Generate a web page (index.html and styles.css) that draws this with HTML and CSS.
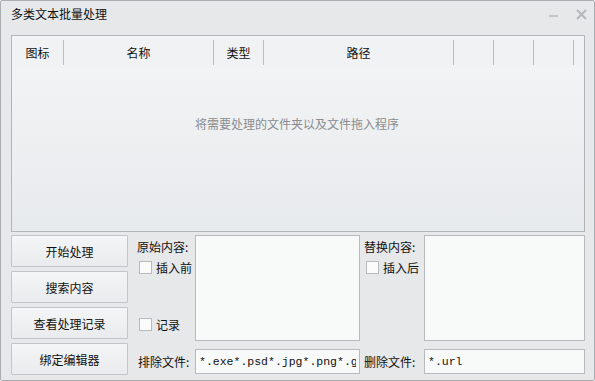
FILE: index.html
```html
<!DOCTYPE html>
<html>
<head>
    <title>多类文本批量处理</title>
    <link rel="stylesheet" href="styles.css">
</head>
<body>
    <div class="window">
        <div class="titlebar">
            <span class="title">多类文本批量处理</span>
            <div class="controls">
                <span class="btn-min"></span>
                <svg class="btn-close" width="11" height="11" viewBox="0 0 11 11">
                    <path d="M1 1 L10 10 M10 1 L1 10" stroke="#b4b8bb" stroke-width="2" fill="none"/>
                </svg>
            </div>
        </div>

        <div class="list">
            <div class="list-head">
                <div class="col c1">图标</div>
                <div class="col c2">名称</div>
                <div class="col c3">类型</div>
                <div class="col c4">路径</div>
                <div class="col c5"></div>
                <div class="col c6"></div>
                <div class="col c7"></div>
            </div>
            <div class="list-body">
                <span class="hint">将需要处理的文件夹以及文件拖入程序</span>
            </div>
        </div>

        <div class="bottom">
            <div class="buttons">
                <button>开始处理</button>
                <button>搜索内容</button>
                <button>查看处理记录</button>
                <button>绑定编辑器</button>
            </div>
            <div class="form">
                <div class="side">
                    <div class="label">原始内容:</div>
                    <label class="check"><span class="box"></span>插入前</label>
                    <label class="check bottom-check"><span class="box"></span>记录</label>
                </div>
                <textarea class="area"></textarea>
                <div class="side side-right">
                    <div class="label">替换内容:</div>
                    <label class="check"><span class="box"></span>插入后</label>
                </div>
                <textarea class="area"></textarea>

                <div class="label row-label">排除文件:</div>
                <input class="field" type="text" value="*.exe*.psd*.jpg*.png*.gif">
                <div class="label row-label right-label">删除文件:</div>
                <input class="field" type="text" value="*.url">
            </div>
        </div>
    </div>
</body>
</html>
```

FILE: styles.css
```css
body {
    margin: 0;
    font-family: "Noto Sans CJK SC", "Liberation Sans", sans-serif;
    font-size: 12px;
    color: #111;
}

.window {
    width: 595px;
    height: 381px;
    box-sizing: border-box;
    border: 1px solid #a9adb0;
    border-radius: 2px;
    background: #e6e8ea;
    padding: 0 9px 0 10px;
}

.titlebar {
    height: 34px;
    box-sizing: border-box;
    padding-bottom: 8px;
    display: flex;
    align-items: center;
    justify-content: space-between;
}

.title {
    font-size: 12px;
    line-height: 14px;
}

.controls {
    display: flex;
    align-items: center;
    gap: 18px;
    margin-right: -2px;
}

.btn-min {
    display: block;
    width: 9px;
    height: 2px;
    background: #c2c5c8;
    margin-top: 4px;
}

.list {
    height: 197px;
    box-sizing: border-box;
    border: 1px solid #b3b6b9;
    display: flex;
    flex-direction: column;
}

.list-head {
    height: 32px;
    display: flex;
    background: #f1f2f3;
}

.col {
    position: relative;
    box-sizing: border-box;
    padding-right: 1px;
    display: flex;
    align-items: center;
    justify-content: center;
}

.col::after {
    content: "";
    position: absolute;
    right: 0;
    top: 4px;
    bottom: 3px;
    width: 1px;
    background: #bcbec0;
}

.c1 { width: 52px; }
.c2 { width: 150px; }
.c3 { width: 50px; }
.c4 { width: 190px; }
.c5, .c6, .c7 { width: 40px; }

.list-body {
    flex: 1;
    background: linear-gradient(#f2f3f4, #e7eaed);
    display: flex;
    align-items: center;
    justify-content: center;
    padding-bottom: 52px;
    padding-right: 2px;
}

.hint {
    color: #8a8c8e;
}

.bottom {
    display: flex;
    gap: 9px;
    margin-top: 3px;
}

.buttons {
    width: 117px;
    display: flex;
    flex-direction: column;
    gap: 4px;
}

button {
    height: 32px;
    font-family: inherit;
    font-size: 12px;
    color: #111;
    background: linear-gradient(#f4f5f6, #e9ebed);
    border: 1px solid #c3c6c9;
    border-radius: 1px;
    padding: 0;
}

.form {
    display: grid;
    grid-template-columns: 58px 165px 64px 161px;
    grid-template-rows: 106px 25px;
    row-gap: 8px;
    column-gap: 0;
}

.side {
    display: flex;
    flex-direction: column;
    padding-top: 5px;
}

.side-right {
    margin-left: 4px;
}

.label {
    line-height: 14px;
}

.check {
    display: flex;
    align-items: center;
    gap: 4px;
    margin-top: 5px;
    margin-left: 2px;
}

.box {
    width: 11px;
    height: 11px;
    border: 1px solid #b8bbbe;
    background: #fbfbfb;
}

.bottom-check {
    margin-top: auto;
    margin-bottom: 8px;
}

.area {
    box-sizing: border-box;
    border: 1px solid #b8bbbe;
    background: #f8f9f9;
    resize: none;
    margin: 0;
}

.row-label {
    display: flex;
    align-items: center;
    margin-left: 1px;
}

.right-label {
    margin-left: 4px;
}

.field {
    box-sizing: border-box;
    height: 25px;
    border: 1px solid #b8bbbe;
    background: #f8f9f9;
    font-family: "Liberation Mono", monospace;
    font-size: 11.5px;
    color: #111;
    padding: 0 3px;
    margin: 0;
    outline: none;
}
```
